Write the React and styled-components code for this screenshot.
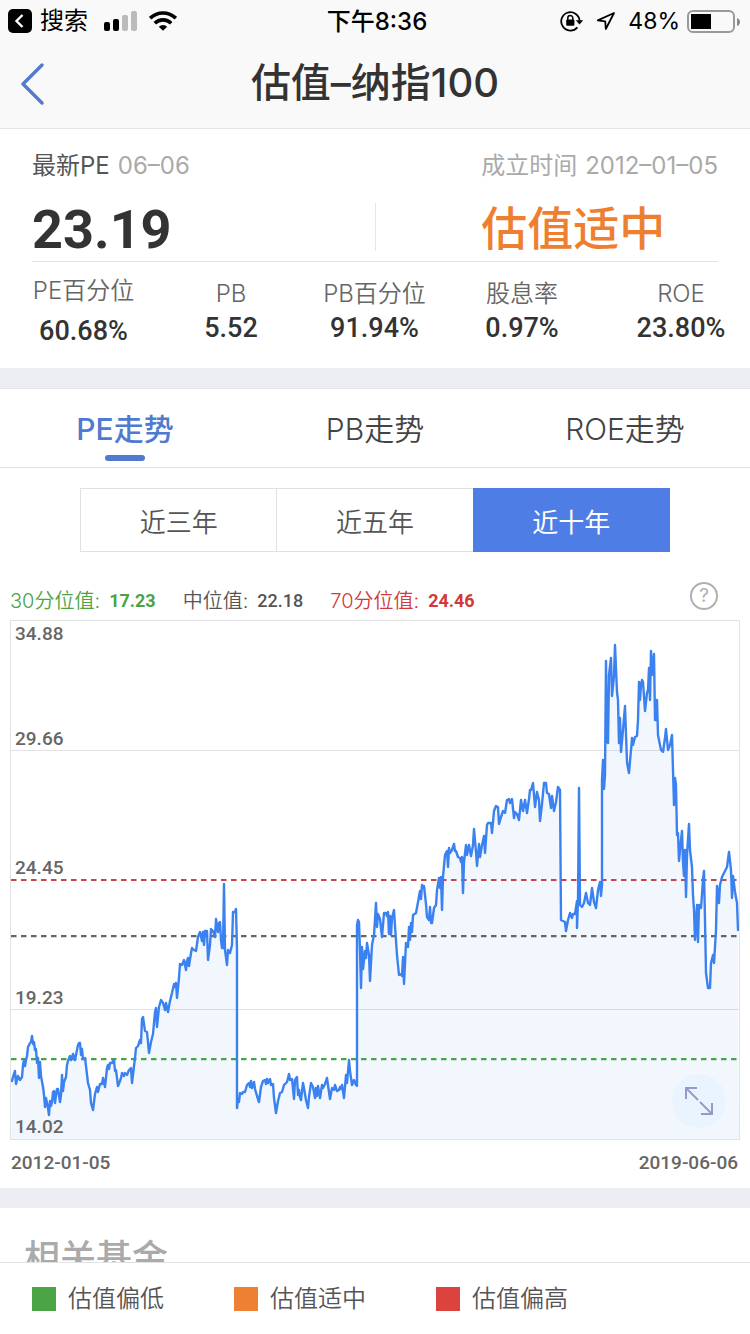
import styled, { createGlobalStyle } from "styled-components"

const GlobalStyle = createGlobalStyle`
    * {
        box-sizing: border-box;
    }
    body {
        margin: 0;
        background: #fff;
        color: #333;
        font-family: "Inter", "Noto Sans CJK SC", sans-serif;
    }
    button {
        margin: 0;
        padding: 0;
        border: none;
        background: none;
        font-family: inherit;
        color: inherit;
        cursor: pointer;
    }
`
const Page = styled.div`
    height: 100vh;
    display: flex;
    flex-direction: column;
`
const Content = styled.main`
    flex: 1;
    min-height: 0;
    overflow: hidden;
`

/* top bars */
const Header = styled.header`
    background: #f9f9f9;
    border-bottom: 1px solid #e4e4e4;
`
const StatusBar = styled.div`
    height: 40px;
    padding: 0 10px 0 8px;
    display: grid;
    grid-template-columns: 1fr auto 1fr;
    align-items: center;
    color: #000;
    font-size: 24px;
    line-height: 40px;
`
const StatusGroup = styled.div`
    display: flex;
    align-items: center;
    justify-content: ${props => props.$end ? "flex-end" : "flex-start"};
    gap: ${props => props.$end ? "12px" : "8px"};
`
const Battery = styled.div`
    display: flex;
    align-items: center;
    gap: 7px;
    font-size: 23px;
`
const Clock = styled.div`
    font-weight: 500;
    font-size: 24px;
    padding: 2px 0 0 6px;
`
const Bars = styled.svg`
    margin: 0 4px 0 8px;
`
const NavBar = styled.div`
    height: 88px;
    padding: 0 20px;
    display: grid;
    grid-template-columns: 1fr auto 1fr;
    align-items: center;
`
const BackButton = styled.button`
    display: flex;
    justify-self: start;
`
const Title = styled.h1`
    margin: 0;
    padding-bottom: 2px;
    font-size: 40px;
    line-height: 56px;
    font-weight: 500;
`

/* summary */
const Summary = styled.section`
    padding-bottom: 22px;
`
const Overview = styled.div`
    margin: 0 32px;
    padding: 21px 0 1px;
    display: grid;
    grid-template-columns: 1fr 1px 1fr;
    align-items: end;
    border-bottom: 1px solid #e2e2e2;
`
const OverviewBlock = styled.div`
    justify-self: ${props => props.$end ? "end" : "start"};
`
const Caption = styled.div`
    display: flex;
    gap: 8px;
    font-size: 24px;
    line-height: 32px;
    font-weight: 400;
    color: ${props => props.$muted ? "#aaa" : "#555"};
    span {
        color: #aaa;
    }
`
const BigNumber = styled.div`
    font-family: "Roboto", sans-serif;
    font-size: 54px;
    line-height: 64px;
    padding-top: 16px;
    height: 78px;
    font-weight: 700;
`
const Verdict = styled.div`
    font-size: 46px;
    line-height: 64px;
    padding-top: 14px;
    height: 78px;
    font-weight: 500;
    color: #ee7f30;
`
const Divider = styled.div`
    height: 48px;
    margin-bottom: 9px;
    background: #e6e6e6;
`
const Metrics = styled.dl`
    margin: 0;
    padding: 13px 0 0 22px;
    display: grid;
    grid-template-columns: 123fr 172fr 115fr 180fr 138fr;
    text-align: center;
    white-space: nowrap;
`
const Metric = styled.div`
    height: 71px;
    display: flex;
    flex-direction: column;
    align-items: center;
    gap: ${props => props.$loose ? "8px" : "2px"};
    padding-top: ${props => props.$loose ? "0" : "3px"};
`
const MetricName = styled.dt`
    font-size: 24px;
    line-height: 32px;
    font-weight: 350;
    color: #666;
`
const MetricValue = styled.dd`
    margin: 0;
    font-family: "Roboto", sans-serif;
    font-size: 27px;
    line-height: 32px;
    font-weight: 500;
`
const Band = styled.div`
    height: 20px;
    background: #edeef4;
`

/* tabs */
const Tabs = styled.div`
    height: 80px;
    display: grid;
    grid-template-columns: repeat(3, 1fr);
    border-top: 1px solid #e6e6e8;
    border-bottom: 1px solid #e2e2e2;
`
const Tab = styled.button`
    padding-top: 19px;
    display: flex;
    flex-direction: column;
    align-items: center;
    gap: 5px;
    font-size: 30px;
    line-height: 42px;
    font-weight: ${props => props.$active ? 500 : 350};
    color: ${props => props.$active ? "#4f7ad0" : "#444"};
    &::after {
        content: "";
        width: 40px;
        height: 6px;
        border-radius: 3px;
        background: ${props => props.$active ? "#4f7ad0" : "transparent"};
    }
`
const Segments = styled.div`
    height: 64px;
    margin: 20px 80px 0;
    display: grid;
    grid-template-columns: repeat(3, 1fr);
    gap: 1px;
    border: 1px solid #e0e0e0;
    background: #e0e0e0;
`
const Segment = styled.button`
    font-size: 26px;
    font-weight: ${props => props.$active ? 400 : 350};
    color: ${props => props.$active ? "#fff" : "#555"};
    background: ${props => props.$active ? "#4d7de5" : "#fff"};
    margin: ${props => props.$active ? "-1px" : "0"};
`

/* chart */
const ChartSection = styled.section`
    padding: 28px 10px 9px;
`
const Legend = styled.div`
    height: 40px;
    padding-right: 22px;
    display: flex;
    gap: 27px;
    font-size: 20px;
    line-height: 42px;
`
const LegendItem = styled.div`
    display: flex;
    gap: 9px;
    font-weight: 350;
    color: ${props => props.$color};
    b {
        font-family: "Roboto", sans-serif;
        font-size: 18px;
        font-weight: ${props => props.$strong ? 700 : 500};
    }
`
const HelpButton = styled.button`
    margin: 2px 0 0 auto;
    width: 28px;
    height: 28px;
    border: 2px solid #b0b0b0;
    border-radius: 50%;
    color: #b0b0b0;
    font-size: 19px;
    line-height: 24px;
`
const Plot = styled.div`
    height: 520px;
    display: grid;
    border: 1px solid #e2e2e2;
    & > * {
        grid-area: 1 / 1;
        min-height: 0;
    }
`
const Curve = styled.svg`
    display: block;
    width: 100%;
    height: 100%;
`
const Scale = styled.div`
    display: grid;
    grid-template-rows: repeat(4, 1fr);
`
const ScaleRow = styled.div`
    padding: 1px 4px 0;
    display: flex;
    flex-direction: column;
    justify-content: space-between;
    font-family: "Roboto", sans-serif;
    font-size: 19px;
    line-height: 24px;
    font-weight: 500;
    color: #666;
`
const ExpandButton = styled.button`
    place-self: end;
    width: 54px;
    height: 54px;
    margin: 0 13px 11px 0;
    display: flex;
    align-items: center;
    justify-content: center;
    border-radius: 50%;
    background: #e9f4fe;
`
const Dates = styled.div`
    padding: 7px 2px 0 1px;
    display: flex;
    justify-content: space-between;
    font-family: "Roboto", sans-serif;
    font-size: 19px;
    line-height: 32px;
    font-weight: 500;
    color: #666;
`
const FundsTitle = styled.h2`
    margin: 0;
    padding: 26px 24px 0;
    font-size: 36px;
    line-height: 48px;
    font-weight: 500;
    color: #aaa;
`

/* bottom key */
const Footer = styled.footer`
    height: 72px;
    padding: 0 32px;
    display: flex;
    gap: 70px;
    align-items: center;
    border-top: 1px solid #e2e2e2;
    background: #fff;
`
const KeyItem = styled.div`
    display: flex;
    align-items: center;
    gap: 12px;
    font-size: 24px;
    line-height: 32px;
    font-weight: 350;
    color: #555;
    &::before {
        content: "";
        width: 24px;
        height: 24px;
        background: ${props => props.$color};
    }
`

const metrics = [
  { name: "PE百分位", value: "60.68%", loose: true },
  { name: "PB", value: "5.52" },
  { name: "PB百分位", value: "91.94%" },
  { name: "股息率", value: "0.97%" },
  { name: "ROE", value: "23.80%" },
]

const levels = [
  { label: "30分位值:", value: "17.23", color: "#4ba342", strong: true },
  { label: "中位值:", value: "22.18", color: "#555" },
  { label: "70分位值:", value: "24.46", color: "#d13a3a", strong: true },
]

const peLine = `
12,1081 13,1077 14,1074 15,1071 16,1084 18,1076 20,1080 22,1077 23,1065 24,1060 25,1066 26,1060 27,1056 28,1047
30,1043 31,1042 32,1036 33,1044 34,1042 35,1050 36,1049 37,1063 38,1058 39,1078 40,1062 41,1076 43,1087 44,1095
45,1107 46,1098 48,1108 49,1115 50,1101 51,1106 52,1102 53,1092 54,1091 55,1103 56,1095 57,1089 58,1089 60,1102
61,1095 62,1075 63,1091 64,1082 66,1077 67,1065 68,1061 70,1056 71,1060 73,1054 75,1060 77,1050 78,1045 79,1043
80,1043 81,1055 82,1049 83,1059 85,1058 86,1066 88,1083 90,1090 91,1103 93,1110 95,1094 97,1087 98,1092 100,1084
102,1084 103,1078 105,1087 107,1068 108,1065 109,1069 110,1063 112,1063 113,1061 114,1060 115,1071 116,1070
118,1086 120,1081 121,1078 122,1073 124,1076 125,1073 127,1075 129,1070 131,1068 132,1083 134,1066 135,1058
136,1048 138,1046 140,1040 141,1043 142,1019 143,1017 145,1031 147,1032 149,1053 151,1042 153,1034 155,1012
156,1008 157,1027 159,1007 161,1000 163,1003 165,1010 166,1003 168,1012 170,1001 172,993 174,984 175,987 176,983
177,998 179,978 180,964 182,965 184,960 186,970 187,961 188,958 189,966 191,953 192,948 194,950 196,951 198,937
200,932 202,941 203,932 204,945 205,931 207,931 208,960 210,945 211,929 213,931 215,937 216,919 218,932 219,923
220,922 221,940 222,948 223,948 224,884 225,950 227,965 228,950 230,953 232,945 233,912 235,912 236,909 237,950
237,1108 238,1100 239,1102 240,1093 242,1094 243,1092 245,1092 247,1085 249,1083 250,1087 251,1081 252,1088
254,1082 255,1089 257,1096 259,1102 261,1087 263,1081 265,1080 266,1084 267,1079 268,1083 270,1079 271,1085
273,1084 274,1098 276,1113 278,1101 280,1093 282,1092 284,1085 287,1082 289,1074 290,1080 292,1079 294,1099
295,1080 297,1077 298,1095 299,1090 300,1097 301,1100 303,1083 304,1088 306,1100 308,1108 309,1097 311,1083
313,1087 315,1098 316,1088 317,1096 318,1086 320,1098 322,1085 323,1088 325,1084 327,1078 328,1085 330,1099
332,1088 334,1090 335,1085 337,1091 339,1090 340,1087 341,1089 342,1085 344,1098 346,1075 347,1083 349,1060
350,1071 352,1085 354,1080 356,1085 357,1086 357,925 358,920 359,922 360,950 361,988 362,947 363,969 365,951
366,958 367,943 369,955 370,981 372,945 374,935 376,903 377,927 378,914 380,919 382,937 384,913 386,913 387,916
388,912 389,934 390,916 391,935 392,918 394,910 395,926 397,955 399,975 401,974 402,976 403,957 404,984 406,943
408,947 409,927 410,940 411,923 412,932 413,915 416,913 418,902 420,891 421,899 422,885 423,888 424,886 426,904
427,917 429,920 430,907 431,923 432,923 434,908 436,905 437,890 439,878 440,888 441,877 442,910 443,877 445,855
447,851 448,867 449,848 450,853 452,850 454,844 455,851 456,851 458,857 460,858 461,862 462,857 463,893 464,862
466,845 467,855 469,845 471,856 473,845 474,829 476,852 477,866 479,844 480,857 482,845 484,836 485,853 487,825
488,823 491,823 492,833 494,811 496,806 498,807 499,824 501,817 503,811 505,813 507,800 509,799 510,803 512,799
514,818 515,812 517,814 519,820 521,800 523,811 525,800 527,813 529,799 530,790 531,790 533,783 535,807 537,792
539,800 540,821 542,804 544,783 546,783 547,793 549,794 551,808 552,796 554,811 556,802 558,787 560,790 561,920
563,921 565,922 566,931 568,920 570,913 572,918 573,914 575,914 577,901 577,928 578,900 579,788 580,905 582,907
584,903 586,893 588,903 590,905 592,888 594,902 596,908 598,890 600,882 601,896 602,885 602,780 603,760 604,789
605,775 606,661 607,742 608,700 608,743 609,675 611,658 612,696 614,676 615,645 617,692 618,700 619,743 620,718
621,752 623,730 625,706 627,762 628,768 629,773 631,750 632,738 633,745 635,737 637,736 638,720 639,682 640,700
641,685 642,680 643,682 645,711 647,693 648,690 649,668 650,700 651,651 652,675 654,654 655,720 656,720 657,700
658,735 660,745 661,750 663,752 665,738 666,729 668,750 670,745 672,735 673,770 674,805 675,778 676,785 677,835
678,833 679,861 681,840 682,831 683,862 684,876 685,850 686,897 687,855 689,824 690,850 692,867 693,895 694,910
695,940 697,905 698,942 699,905 701,908 703,880 704,871 705,920 706,973 708,988 710,988 711,963 713,955 714,963
716,930 717,886 719,903 720,885 722,877 725,871 727,867 729,852 731,870 732,898 733,876 735,892 737,903 738,930
`

function BackToAppIcon() {
  return (
    <svg width="24" height="24" viewBox="0 0 24 24">
      <rect width="24" height="24" rx="5" />
      <path d="M14.5 6 8.5 12l6 6" fill="none" stroke="#fff" strokeWidth="2.4" />
    </svg>
  )
}

function SignalIcon() {
  return (
    <Bars width="33" height="20" viewBox="0 0 33 20">
      <rect x="0" y="11" width="6" height="9" rx="2" />
      <rect x="9" y="8" width="6" height="12" rx="2" />
      <rect x="18" y="4" width="6" height="16" rx="2" fill="#bbb" />
      <rect x="27" y="0" width="6" height="20" rx="2" fill="#bbb" />
    </Bars>
  )
}

function WifiIcon() {
  return (
    <svg width="28" height="20" viewBox="0 0 28 20" fill="none" stroke="#000" strokeWidth="3.6">
      <path d="M1.2 7.2a18.4 18.4 0 0 1 25.6 0" />
      <path d="M5.8 12.2a11.8 11.8 0 0 1 16.4 0" />
      <path d="M14 19.8 9.8 15.8a6 6 0 0 1 8.4 0z" fill="#000" stroke="none" />
    </svg>
  )
}

function LockIcon() {
  return (
    <svg width="24" height="22" viewBox="0 0 24 22">
      <path d="M17.4 17.4A9.2 9.2 0 1 1 19.6 10.6" fill="none" stroke="#000" strokeWidth="1.8" />
      <path d="M15.8 10.2h7.4L19.5 14.4z" />
      <rect x="6.2" y="9.4" width="8.2" height="6.4" rx="1" />
      <path d="M7.8 10V8a2.5 2.5 0 0 1 5 0v2" fill="none" stroke="#000" strokeWidth="1.5" />
    </svg>
  )
}

function LocationIcon() {
  return (
    <svg width="20" height="20" viewBox="0 0 20 20">
      <path d="M18 2 1.8 9.4l7.4.9.6 7.7z" fill="none" stroke="#000" strokeWidth="1.8" strokeLinejoin="round" />
    </svg>
  )
}

function BatteryIcon() {
  return (
    <svg width="53" height="24" viewBox="0 0 53 24">
      <rect x="1" y="2" width="46" height="21" rx="5" fill="none" stroke="#999" strokeWidth="2" />
      <rect x="4" y="5" width="20" height="15" fill="#000" />
      <path d="M50 9q3 1 3 4t-3 4z" fill="#888" />
    </svg>
  )
}

function Chart() {
  return (
    <Curve viewBox="11 621 728 518" preserveAspectRatio="none" fill="none">
      <g stroke="#e2e2e2">
        <line x1="11" x2="739" y1="750.5" y2="750.5" />
        <line x1="11" x2="739" y1="1009.5" y2="1009.5" />
      </g>
      <polygon points={`11,1139 ${peLine} 739,1139`} fill="#3b82f6" fillOpacity="0.065" />
      <g strokeWidth="2.2" strokeDasharray="5.5 4.5">
        <line x1="11" x2="737" y1="880" y2="880" stroke="#c9444a" />
        <line x1="11" x2="737" y1="936.2" y2="936.2" stroke="#666" />
        <line x1="11" x2="737" y1="1059.2" y2="1059.2" stroke="#46a546" />
      </g>
      <polyline points={peLine} stroke="#3b82f0" strokeWidth="2.4" strokeLinejoin="round" strokeLinecap="round" />
    </Curve>
  )
}

export default function App() {
  return (
    <Page>
      <GlobalStyle />
      <Header>
        <StatusBar>
          <StatusGroup>
            <BackToAppIcon />
            <span>搜索</span>
            <SignalIcon />
            <WifiIcon />
          </StatusGroup>
          <Clock>下午8:36</Clock>
          <StatusGroup $end>
            <LockIcon />
            <LocationIcon />
            <Battery>
              <span>48%</span>
              <BatteryIcon />
            </Battery>
          </StatusGroup>
        </StatusBar>
        <NavBar>
          <BackButton aria-label="返回">
            <svg width="25" height="42" viewBox="0 0 25 42">
              <path d="M22 2 3 21l19 19" fill="none" stroke="#527bcb" strokeWidth="3.4" strokeLinecap="round" strokeLinejoin="round" />
            </svg>
          </BackButton>
          <Title>估值–纳指100</Title>
        </NavBar>
      </Header>
      <Content>
        <Summary>
          <Overview>
            <OverviewBlock>
              <Caption>最新PE<span>06–06</span></Caption>
              <BigNumber>23.19</BigNumber>
            </OverviewBlock>
            <Divider />
            <OverviewBlock $end>
              <Caption $muted>成立时间<span>2012–01–05</span></Caption>
              <Verdict>估值适中</Verdict>
            </OverviewBlock>
          </Overview>
          <Metrics>
            {metrics.map(item => (
              <Metric key={item.name} $loose={item.loose}>
                <MetricName>{item.name}</MetricName>
                <MetricValue>{item.value}</MetricValue>
              </Metric>
            ))}
          </Metrics>
        </Summary>
        <Band />
        <Tabs>
          <Tab $active>PE走势</Tab>
          <Tab>PB走势</Tab>
          <Tab>ROE走势</Tab>
        </Tabs>
        <Segments>
          <Segment>近三年</Segment>
          <Segment>近五年</Segment>
          <Segment $active>近十年</Segment>
        </Segments>
        <ChartSection>
          <Legend>
            {levels.map(item => (
              <LegendItem key={item.label} $color={item.color} $strong={item.strong}>
                {item.label}<b>{item.value}</b>
              </LegendItem>
            ))}
            <HelpButton aria-label="说明">?</HelpButton>
          </Legend>
          <Plot>
            <Chart />
            <Scale>
              <ScaleRow><span>34.88</span><span>29.66</span></ScaleRow>
              <ScaleRow><span /><span>24.45</span></ScaleRow>
              <ScaleRow><span /><span>19.23</span></ScaleRow>
              <ScaleRow><span /><span>14.02</span></ScaleRow>
            </Scale>
            <ExpandButton aria-label="全屏">
              <svg width="30" height="30" viewBox="0 0 30 30" fill="none" stroke="#959bc9" strokeWidth="2">
                <path d="M13 2H2v11M2 2l12 12M17 28h11V17M28 28 16 16" />
              </svg>
            </ExpandButton>
          </Plot>
          <Dates>
            <span>2012-01-05</span>
            <span>2019-06-06</span>
          </Dates>
        </ChartSection>
        <Band />
        <FundsTitle>相关基金</FundsTitle>
      </Content>
      <Footer>
        <KeyItem $color="#4ba545">估值偏低</KeyItem>
        <KeyItem $color="#ee8033">估值适中</KeyItem>
        <KeyItem $color="#dd433e">估值偏高</KeyItem>
      </Footer>
    </Page>
  )
}
